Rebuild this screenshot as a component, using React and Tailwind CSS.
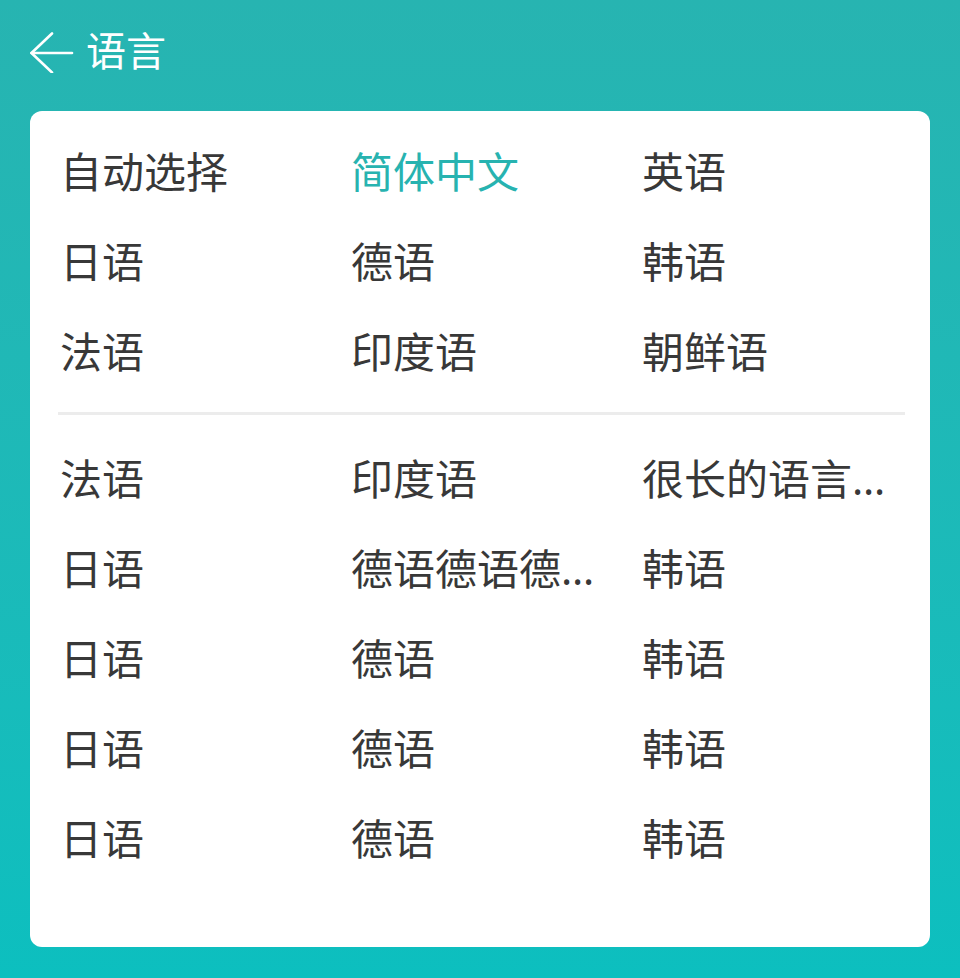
const font = { fontFamily: '"Noto Sans", "Noto Sans CJK SC", sans-serif' };

const topLangs = ['自动选择', '简体中文', '英语', '日语', '德语', '韩语', '法语', '印度语', '朝鲜语'];
const moreLangs = [
  '法语', '印度语', '很长的语言很长的语言',
  '日语', '德语德语德语德语德语', '韩语',
  '日语', '德语', '韩语',
  '日语', '德语', '韩语',
  '日语', '德语', '韩语',
];

const selected = '简体中文';

const LangGrid = ({ items }) => (
  <div className="grid grid-cols-[259px_259px_257px] gap-x-[32px]">
    {items.map((name, i) => (
      <div
        key={i}
        className={`h-[90px] truncate text-[42px] leading-[90px] ${name === selected ? 'text-[#27b3b0]' : 'text-[#383838]'}`}
      >
        {name}
      </div>
    ))}
  </div>
);

export default function App() {
  return (
    <div
      className="min-h-[978px] w-full bg-gradient-to-b from-[#27b4b1] to-[#0cbfbf] px-[30px] pt-[24px] pb-[31px]"
      style={font}
    >
      {/* Header */}
      <div className="flex h-[54px] items-center gap-[12px]">
        <svg width="44" height="44" viewBox="0 0 44 44" fill="none" stroke="white" strokeWidth="2.6" strokeLinecap="round" strokeLinejoin="round">
          <path d="M22 4.5 L1.5 24 L22 43.5" />
          <path d="M1.5 24 H42" />
        </svg>
        <span className="text-[40px] leading-none text-white">语言</span>
      </div>

      {/* Card */}
      <div className="mt-[33px] h-[836px] rounded-[12px] bg-white pl-[30px] pr-[27px] pt-[16px]">
        <LangGrid items={topLangs} />
        <div className="-ml-[2px] -mr-[2px] mt-[15px] mb-[19px] h-[3px] bg-[#ececec]" />
        <LangGrid items={moreLangs} />
      </div>
    </div>
  );
}
